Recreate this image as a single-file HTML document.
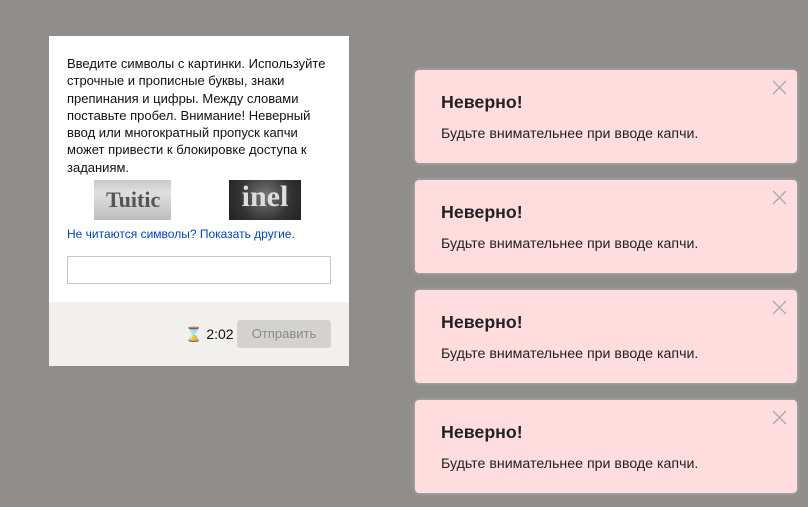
<!DOCTYPE html>
<html><head><meta charset="utf-8"><style>
body{margin:0;width:808px;height:507px;background:#8f8e8c;position:relative;overflow:hidden;font-family:"Liberation Sans",sans-serif}
.p{position:absolute;left:49px;top:36px;width:300px;height:330px;background:#fff}
.txt{position:absolute;left:18px;top:19px;width:266px;font-size:13px;line-height:17.3px;color:#111}
.i1{position:absolute;left:45px;top:144px;width:77px;height:40px;background:linear-gradient(#c8c8c8,#e0e0e0 30%,#bdbdbd);font:bold 22px "Liberation Serif",serif;color:#555;overflow:hidden;line-height:40px;text-indent:12px}
.i2{position:absolute;left:180px;top:144px;width:72px;height:40px;background:radial-gradient(circle at 50% 40%,#777,#333 60%,#222);font:bold 30px "Liberation Serif",serif;color:#ddd;overflow:hidden;line-height:34px;text-align:center}
.lnk{position:absolute;left:18px;top:191px;font-size:12px;color:#0044bb}
.in{position:absolute;left:18px;top:220px;width:262px;height:26px;border:1px solid #c8c8c8}
.f{position:absolute;left:0;top:266px;width:300px;height:64px;background:#f1f0ed}
.tm{position:absolute;left:136px;top:24px;font-size:14px;color:#111}
.bt{position:absolute;left:188px;top:18px;width:94px;height:28px;background:#d3d2cf;border-radius:3px;color:#8a8a8a;font-size:13px;text-align:center;line-height:28px}
.t{position:absolute;left:415px;width:382px;height:93px;background:#ffdddf;border-radius:4px;box-shadow:0 0 4px rgba(255,255,255,.35)}
.t h{position:absolute;left:26px;top:22px;font-weight:bold;font-size:17.8px;color:#222}
.t p{position:absolute;left:26px;top:56px;margin:0;font-size:14.2px;color:#222}
.t svg{position:absolute;right:10px;top:10px}
</style></head><body>
<div class="p">
<div class="txt">Введите символы с картинки. Используйте строчные и прописные буквы, знаки препинания и цифры. Между словами поставьте пробел. Внимание! Неверный ввод или многократный пропуск капчи может привести к блокировке доступа к заданиям.</div>
<div class="i1">Tuitic</div><div class="i2">inel</div>
<div class="lnk">Не читаются символы? Показать другие.</div>
<div class="in"></div>
<div class="f"><div class="tm">⌛ 2:02</div><div class="bt">Отправить</div></div>
</div>
<div class="t" style="top:70px"><h>Неверно!</h><p>Будьте внимательнее при вводе капчи.</p><svg width="15" height="15"><path d="M1 1L14 14M14 1L1 14" stroke="#aaa" stroke-width="1.3"/></svg></div>
<div class="t" style="top:180px"><h>Неверно!</h><p>Будьте внимательнее при вводе капчи.</p><svg width="15" height="15"><path d="M1 1L14 14M14 1L1 14" stroke="#aaa" stroke-width="1.3"/></svg></div>
<div class="t" style="top:290px"><h>Неверно!</h><p>Будьте внимательнее при вводе капчи.</p><svg width="15" height="15"><path d="M1 1L14 14M14 1L1 14" stroke="#aaa" stroke-width="1.3"/></svg></div>
<div class="t" style="top:400px"><h>Неверно!</h><p>Будьте внимательнее при вводе капчи.</p><svg width="15" height="15"><path d="M1 1L14 14M14 1L1 14" stroke="#aaa" stroke-width="1.3"/></svg></div>
</body></html>
